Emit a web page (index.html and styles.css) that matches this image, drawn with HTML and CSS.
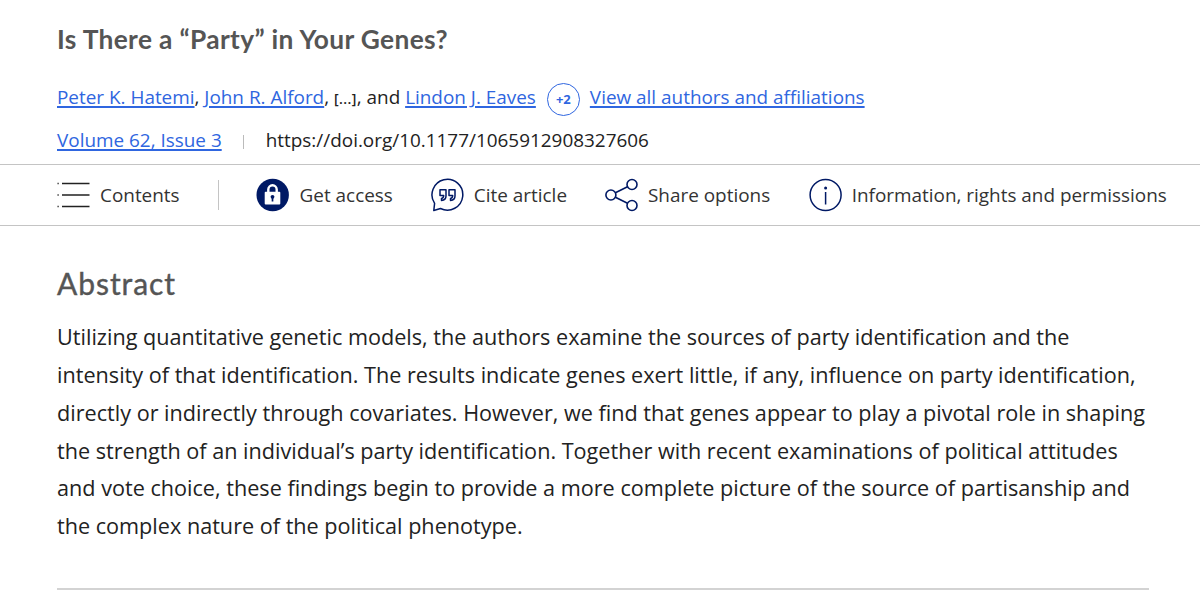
FILE: index.html
```html
<!DOCTYPE html>
<html lang="en">
<head>
  <meta charset="UTF-8">
  <title>Is There a “Party” in Your Genes?</title>
  <link rel="stylesheet" href="styles.css">
</head>
<body>
  <header class="article-header">
    <h1>Is There a “Party” in Your Genes?</h1>
    <div class="authors">
      <span class="names"><a href="#">Peter K. Hatemi</a>, <a href="#">John R. Alford</a>, <span class="more">[...]</span>, and <a href="#">Lindon J. Eaves</a></span>
      <span class="count">+2</span>
      <a href="#" class="view-all">View all authors and affiliations</a>
    </div>
    <div class="meta">
      <a href="#" class="issue">Volume 62, Issue 3</a>
      <span class="bar"></span>
      <span class="doi">https://doi.org/10.1177/1065912908327606</span>
    </div>
  </header>

  <nav class="toolbar">
    <div class="tool contents">
      <svg width="33" height="28" viewBox="0 0 33 28" fill="none" stroke="#222" stroke-width="1.4">
        <path d="M.5 2.500h1.200M5 2.500h27.500M.5 14h1.200M5 14h27.500M.5 25.500h1.200M5 25.500h27.500"/>
      </svg>
      <span class="label">Contents</span>
    </div>
    <span class="divider"></span>
    <div class="tool access">
      <svg width="34" height="34" viewBox="0 0 34 34">
        <circle cx="16.700" cy="17" r="16.200" fill="#001965"/>
        <path d="M12.300 15v-3.500a4.200 4.200 0 0 1 8.400 0V15" fill="none" stroke="#fff" stroke-width="2.400"/>
        <rect x="8.700" y="13.800" width="15.600" height="12.700" rx="1" fill="#fff"/>
        <circle cx="16.500" cy="18.800" r="1.900" fill="#001965"/>
        <path d="M16.500 19v4.500" stroke="#001965" stroke-width="1.700"/>
      </svg>
      <span class="label">Get access</span>
    </div>
    <div class="tool cite">
      <svg width="33" height="34" viewBox="0 0 33 34" fill="none" stroke="#001965" stroke-width="1.500">
        <path d="M3.600 25.300A15.400 15.400 0 1 1 9.500 30.500L2.800 32.500z" stroke-linejoin="round"/>
        <path d="M9 11.700h6v6.300q0 4-4.500 4.500v-2.100q2.200-.5 2.200-2.900H9zM18 11.700h6v6.300q0 4-4.500 4.500v-2.100q2.200-.5 2.200-2.900H18z" stroke-linejoin="round"/>
      </svg>
      <span class="label">Cite article</span>
    </div>
    <div class="tool share">
      <svg width="33" height="34" viewBox="0 0 33 34" fill="none" stroke="#001965" stroke-width="1.600">
        <circle cx="5.900" cy="17" r="5"/><circle cx="27" cy="6.500" r="5"/><circle cx="27" cy="27.500" r="5"/>
        <path d="M10.400 14.800L22.500 8.700M10.400 19.200L22.500 25.300"/>
      </svg>
      <span class="label">Share options</span>
    </div>
    <div class="tool info">
      <svg width="33" height="34" viewBox="0 0 33 34" fill="none" stroke="#001965" stroke-width="1.500">
        <circle cx="16.600" cy="17" r="15.500"/>
        <path d="M16.600 14v12.500"/><circle cx="16.600" cy="10" r="1.500" fill="#001965" stroke="none"/>
      </svg>
      <span class="label">Information, rights and permissions</span>
    </div>
  </nav>

  <main class="abstract">
    <h2>Abstract</h2>
    <p>
      Utilizing quantitative genetic models, the authors examine the sources of party identification and the<br>
      intensity of that identification. The results indicate genes exert little, if any, influence on party identification,<br>
      directly or indirectly through covariates. However, we find that genes appear to play a pivotal role in shaping<br>
      the strength of an individual’s party identification. Together with recent examinations of political attitudes<br>
      and vote choice, these findings begin to provide a more complete picture of the source of partisanship and<br>
      the complex nature of the political phenotype.
    </p>
  </main>
</body>
</html>
```

FILE: styles.css
```css
* { box-sizing: border-box; }
body { margin: 0; background: #fff; color: #222; font-family: "Open Sans", sans-serif; font-size: 18.92px; }
a { color: #2f66e0; text-decoration: underline; text-underline-offset: 2px; text-decoration-thickness: 1.5px; }
h1, h2 { margin: 0; color: #555; font-family: Lato, sans-serif; white-space: nowrap; }

.article-header { height: 164px; padding: 22px 57px 0; }
h1 { font-size: 26.3px; line-height: 34px; font-weight: 700; letter-spacing: 0.35px; }
.authors { display: flex; align-items: center; height: 34px; margin-top: 26px; white-space: nowrap; }
.names, .view-all { padding-bottom: 4px; }
.more { font-size: 14px; font-weight: 600; letter-spacing: 0.4px; }
.count { display: flex; align-items: center; justify-content: center; width: 33px; height: 33px; margin: 0 10px 0 11px; border: 1.5px solid #2f66e0; border-radius: 50%; color: #2f66e0; font-size: 13px; font-weight: 700; }
.meta { display: flex; align-items: center; height: 28px; margin-top: 10px; white-space: nowrap; }
.bar { width: 1px; height: 14px; margin: 3px 22px 0 21px; background: #bbb; }

.toolbar { display: flex; align-items: center; height: 62px; padding-left: 57px; border-top: 1px solid #c4c4c4; border-bottom: 1px solid #c4c4c4; white-space: nowrap; }
.tool { display: flex; align-items: center; flex-shrink: 0; color: #333; }
.tool svg { flex-shrink: 0; margin-right: 10px; }
.divider { width: 1px; height: 30px; margin: 0 37px 0 38px; background: #c4c4c4; }
.access, .cite { margin-right: 38px; }
.share { margin-right: 38.5px; }

.abstract { margin: 0 51px 0 57px; padding-top: 37px; height: 364px; border-bottom: 2px solid #d3d3d3; }
h2 { font-size: 30px; line-height: 40px; font-weight: 400; letter-spacing: 0.95px; -webkit-text-stroke: 0.4px #555; }
p { margin: 15px 0 0; font-size: 21.64px; line-height: 37.85px; white-space: nowrap; }
```
